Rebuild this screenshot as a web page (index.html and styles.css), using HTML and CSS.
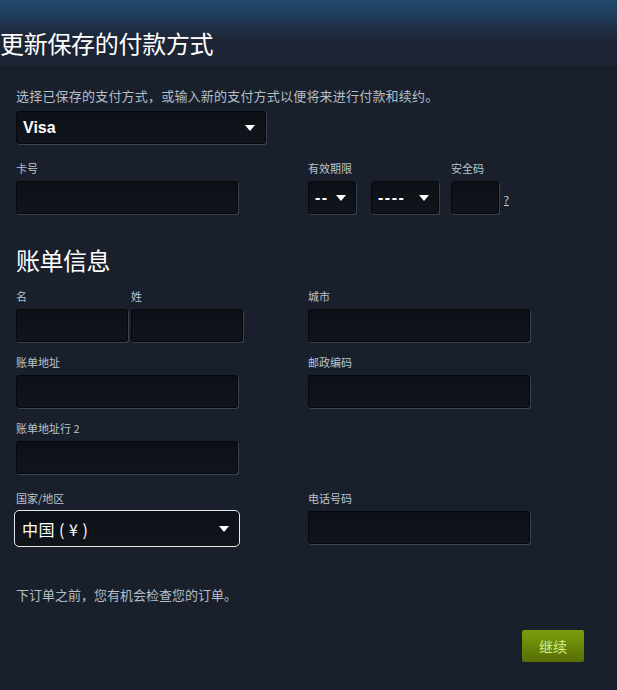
FILE: index.html
```html
<!DOCTYPE html>
<html lang="zh-CN">
<head>
<meta charset="utf-8">
<title>更新保存的付款方式</title>
<link rel="stylesheet" href="styles.css">
</head>
<body>
<header class="page-header">
  <h1 class="page-title">更新保存的付款方式</h1>
</header>
<main class="content">
  <p class="intro">选择已保存的支付方式，或输入新的支付方式以便将来进行付款和续约。</p>
  <div class="select select-method"><span class="select-value bold">Visa</span><span class="arrow"></span></div>

  <div class="card-row">
    <div class="field field-card">
      <label class="label">卡号</label>
      <div class="input w222"></div>
    </div>
    <div class="field field-expiry">
      <label class="label">有效期限</label>
      <div class="expiry-controls">
        <div class="select select-month"><span class="select-value dash">--</span><span class="arrow"></span></div>
        <div class="select select-year"><span class="select-value dash">----</span><span class="arrow"></span></div>
      </div>
    </div>
    <div class="field field-cvv">
      <label class="label">安全码</label>
      <div class="cvv-controls">
        <div class="input w48"></div>
        <a class="help" href="#">?</a>
      </div>
    </div>
  </div>

  <h2 class="section-title">账单信息</h2>

  <div class="billing">
    <div class="cell">
      <div class="name-row">
        <div class="field">
          <label class="label">名</label>
          <div class="input w112"></div>
        </div>
        <div class="field">
          <label class="label">姓</label>
          <div class="input w112"></div>
        </div>
      </div>
    </div>
    <div class="cell">
      <div class="field">
        <label class="label">城市</label>
        <div class="input w222"></div>
      </div>
    </div>

    <div class="cell">
      <div class="field">
        <label class="label">账单地址</label>
        <div class="input w222"></div>
      </div>
    </div>
    <div class="cell">
      <div class="field">
        <label class="label">邮政编码</label>
        <div class="input w222"></div>
      </div>
    </div>

    <div class="cell">
      <div class="field">
        <label class="label">账单地址行 2</label>
        <div class="input w222"></div>
      </div>
    </div>
    <div class="cell"></div>

    <div class="cell country-row">
      <div class="field">
        <label class="label">国家/地区</label>
        <div class="select select-country"><span class="select-value country-value">中国 ( ¥ )</span><span class="arrow"></span></div>
      </div>
    </div>
    <div class="cell country-row">
      <div class="field">
        <label class="label">电话号码</label>
        <div class="input w222 phone"></div>
      </div>
    </div>
  </div>

  <p class="note">下订单之前，您有机会检查您的订单。</p>

  <div class="actions">
    <button class="btn-continue" type="button">继续</button>
  </div>
</main>
</body>
</html>
```

FILE: styles.css
```css
html, body {
  margin: 0;
  padding: 0;
}

body {
  background: #19202b;
  color: #c6d4df;
  font-family: "Noto Sans", "Noto Sans CJK SC", sans-serif;
  width: 617px;
  height: 690px;
  overflow: hidden;
}

.page-header {
  height: 66px;
  box-sizing: border-box;
  padding-top: 28px;
  background: linear-gradient(to bottom, #214a6c 0%, #203f5d 22%, #1e2d43 45%, #1d2535 62%, #1d2433 100%);
}

.page-title {
  margin: 0;
  font-family: "Noto Sans CJK SC", sans-serif;
  font-size: 24px;
  line-height: 30px;
  font-weight: 400;
  color: #ffffff;
  letter-spacing: -0.3px;
}

.content {
  padding: 22px 16px 0 16px;
}

.intro {
  margin: 0 0 7px 0;
  font-family: "Noto Sans CJK SC", sans-serif;
  font-size: 13px;
  line-height: 16px;
  color: #b4bec8;
  letter-spacing: 0.2px;
}

.label {
  display: block;
  font-family: "Noto Sans CJK SC", sans-serif;
  font-size: 11px;
  line-height: 14px;
  height: 14px;
  margin-bottom: 6px;
  color: #b9c4cf;
  white-space: nowrap;
}

.input {
  height: 33px;
  box-sizing: border-box;
  background: linear-gradient(to bottom, #0c1016, #10151c);
  border: 1px solid #05070a;
  border-radius: 3px;
  box-shadow: 1px 1px 0 #3c4452;
}

.w222 { width: 222px; }
.w112 { width: 112px; }
.w48 { width: 48px; }

.select {
  height: 33px;
  box-sizing: border-box;
  background: linear-gradient(to bottom, #0c1016, #10151c);
  border: 1px solid #05070a;
  border-radius: 3px;
  box-shadow: 1px 1px 0 #3c4452;
  display: flex;
  align-items: center;
  justify-content: space-between;
  padding: 0 10px 0 6px;
  color: #ffffff;
}

.select-value {
  font-family: "Noto Sans CJK SC", sans-serif;
  font-size: 16px;
  line-height: 20px;
  color: #ffffff;
  white-space: pre;
}

.select-value.bold {
  font-family: "Liberation Sans", "Noto Sans CJK SC", sans-serif;
  font-weight: 700;
  font-size: 16px;
}

.select-value.dash {
  font-family: "Liberation Sans", sans-serif;
  font-size: 16px;
  font-weight: 700;
  letter-spacing: 1.5px;
}

.arrow {
  width: 0;
  height: 0;
  border-left: 5px solid transparent;
  border-right: 5px solid transparent;
  border-top: 6px solid #ffffff;
  flex: none;
}

.select-method {
  width: 250px;
  margin-bottom: 17px;
}

.card-row {
  display: flex;
  margin-bottom: 31px;
}

.field-card { width: 292px; }
.field-expiry { width: 143px; }

.expiry-controls {
  display: flex;
  gap: 15px;
}

.select-month { width: 48px; padding-right: 9px; }
.select-year { width: 68px; padding-right: 9px; }

.cvv-controls {
  display: flex;
  align-items: center;
}

.help {
  margin-left: 5px;
  margin-top: 3px;
  font-family: "Noto Sans", sans-serif;
  font-size: 11px;
  color: #c6d4df;
  text-decoration: underline;
}

.section-title {
  margin: 0 0 14px 0;
  font-family: "Noto Sans CJK SC", sans-serif;
  font-size: 24px;
  line-height: 30px;
  font-weight: 400;
  color: #ffffff;
  letter-spacing: -0.5px;
}

.billing {
  display: grid;
  grid-template-columns: 292px 222px;
  row-gap: 13px;
}

.name-row {
  display: flex;
  gap: 3px;
}

.country-row {
  margin-top: 4px;
}

.select-country {
  width: 226px;
  height: 37px;
  margin: -1px 0 0 -2px;
  border: 1px solid #e6e9ec;
  border-radius: 5px;
  box-shadow: none;
  padding: 0 10px 0 7px;
}

.country-value {
  letter-spacing: 0.5px;
}

.phone {
  margin-top: 1px;
}

.note {
  margin: 40px 0 0 0;
  font-family: "Noto Sans CJK SC", sans-serif;
  font-size: 13px;
  line-height: 16px;
  color: #b4bec8;
}

.actions {
  display: flex;
  justify-content: flex-end;
  padding-right: 17px;
  margin-top: 27px;
}

.btn-continue {
  width: 62px;
  height: 32px;
  border: none;
  border-radius: 2px;
  background: linear-gradient(to bottom, #7d9c0c 0%, #6a8608 50%, #566d06 100%);
  color: #d3ea86;
  font-family: "Noto Sans CJK SC", sans-serif;
  font-size: 14px;
  line-height: 32px;
  padding: 0;
  cursor: pointer;
}
```
